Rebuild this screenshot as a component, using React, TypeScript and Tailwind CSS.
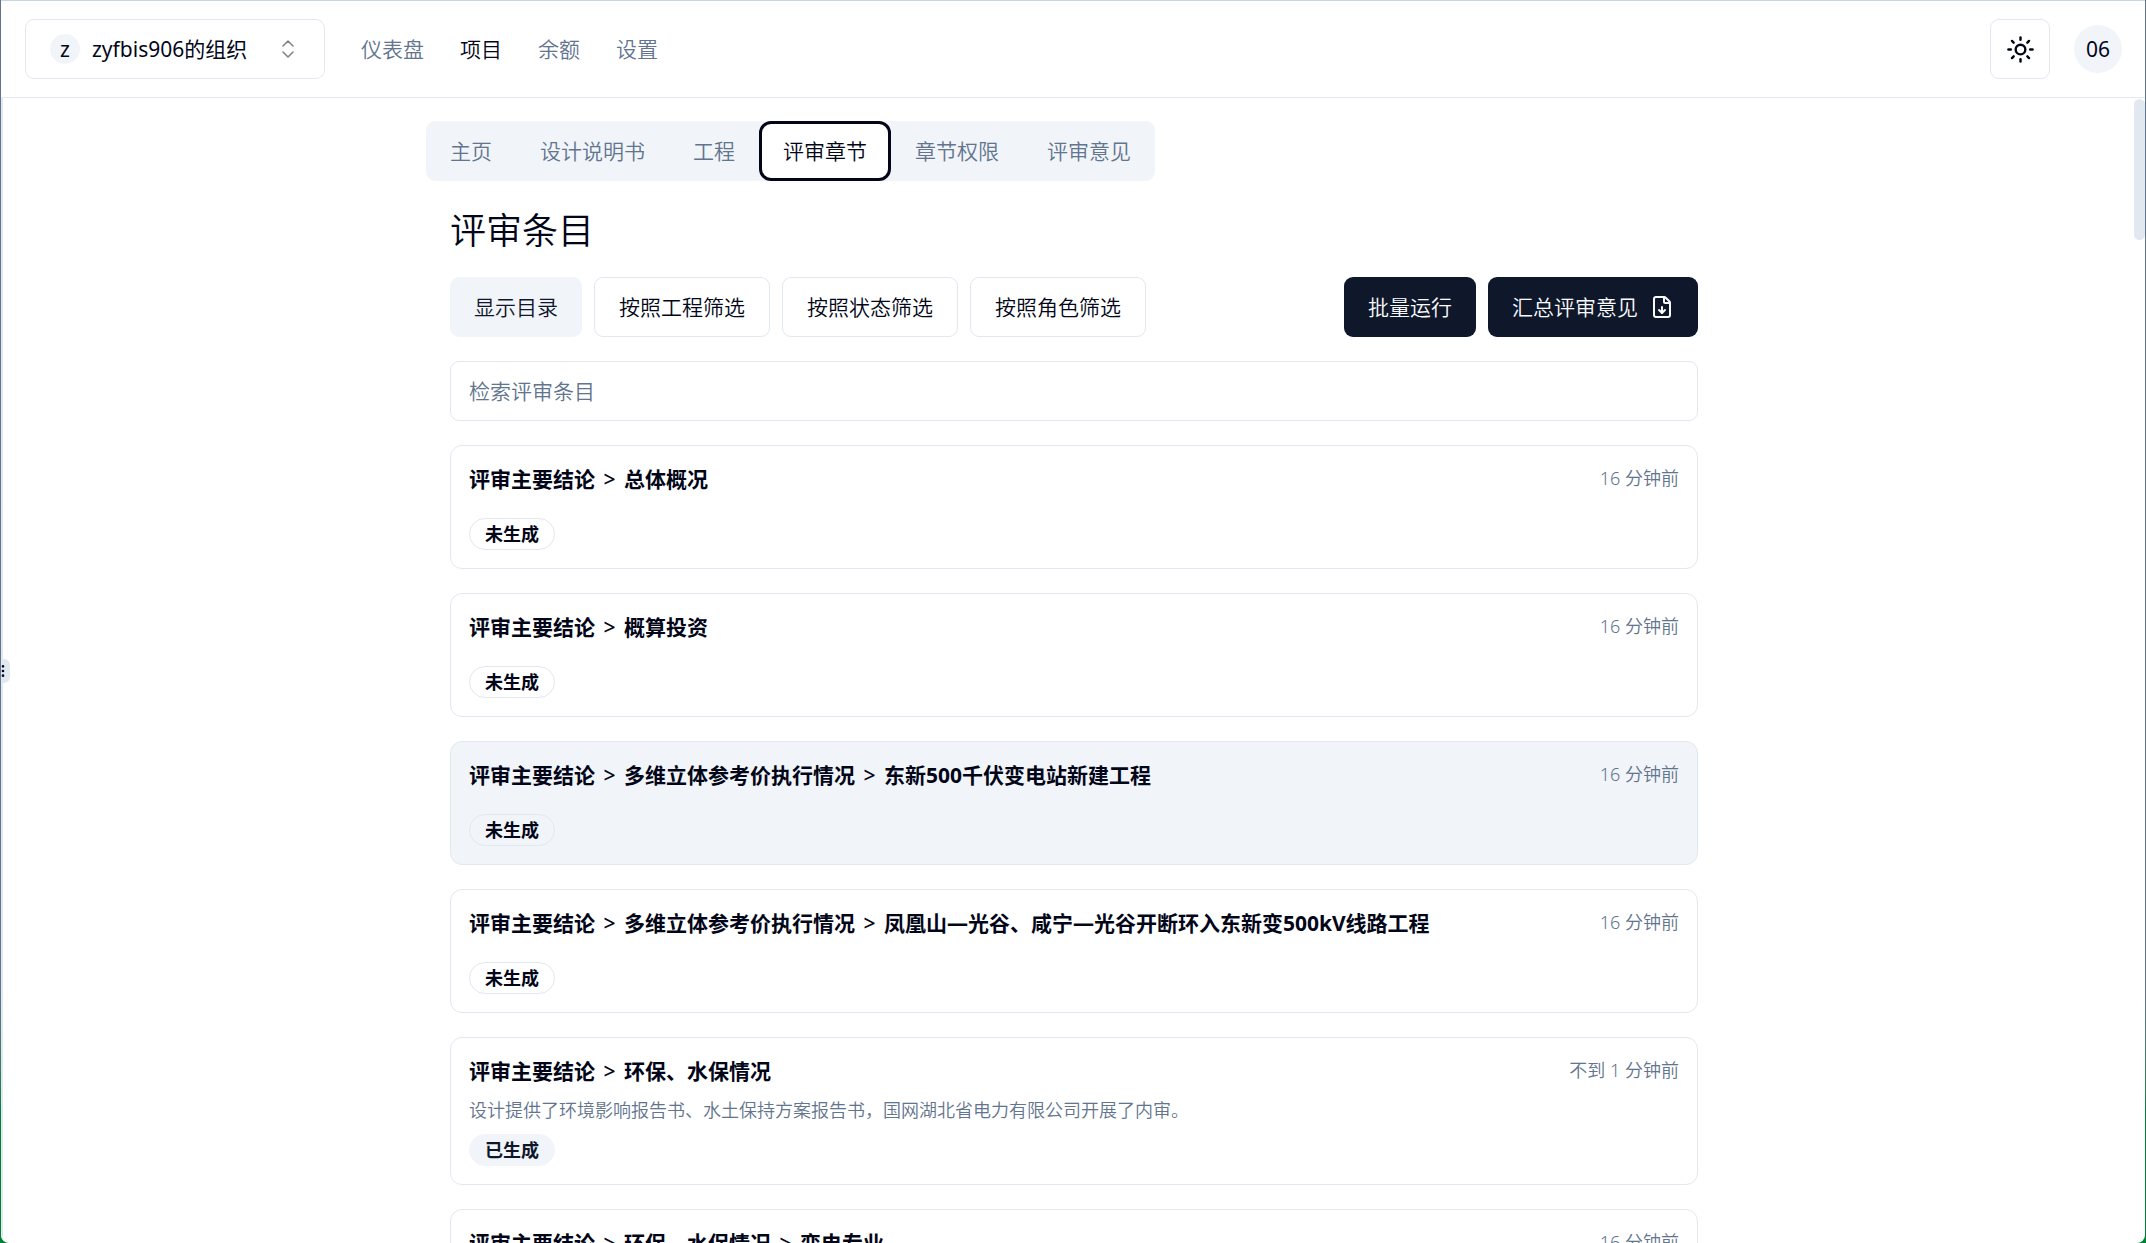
import { ChevronsUpDown, EllipsisVertical, FileDown, Sun } from "lucide-react";
import { Fragment } from "react";

const navLinks = ["仪表盘", "项目", "余额", "设置"];
const tabs = ["主页", "设计说明书", "工程", "评审章节", "章节权限", "评审意见"];
const filters = ["按照工程筛选", "按照状态筛选", "按照角色筛选"];

type Entry = {
  path: string[];
  time: string;
  summary?: string;
  done?: boolean;
  highlighted?: boolean;
};

const entries: Entry[] = [
  { path: ["评审主要结论", "总体概况"], time: "16 分钟前" },
  { path: ["评审主要结论", "概算投资"], time: "16 分钟前" },
  {
    path: ["评审主要结论", "多维立体参考价执行情况", "东新500千伏变电站新建工程"],
    time: "16 分钟前",
    highlighted: true,
  },
  {
    path: ["评审主要结论", "多维立体参考价执行情况", "凤凰山—光谷、咸宁—光谷开断环入东新变500kV线路工程"],
    time: "16 分钟前",
  },
  {
    path: ["评审主要结论", "环保、水保情况"],
    time: "不到 1 分钟前",
    summary: "设计提供了环境影响报告书、水土保持方案报告书，国网湖北省电力有限公司开展了内审。",
    done: true,
  },
  { path: ["评审主要结论", "环保、水保情况", "变电专业"], time: "16 分钟前" },
];

function Header() {
  return (
    <header className="flex h-[97px] shrink-0 items-center border-b border-slate-200 pr-[23px] pl-6">
      <button className="flex h-[60px] w-[300px] items-center rounded-[9px] border border-slate-200 px-6 font-normal">
        <span className="mr-3 flex size-[30px] items-center justify-center rounded-full bg-slate-100">z</span>
        <span>zyfbis906的组织</span>
        <ChevronsUpDown className="ml-auto size-6 opacity-50" strokeWidth={1.5} />
      </button>
      <nav className="ml-9 flex gap-9">
        {navLinks.map((label) => (
          <a key={label} href="#" className={label === "项目" ? "text-slate-950" : "text-slate-500"}>
            {label}
          </a>
        ))}
      </nav>
      <button aria-label="切换主题" className="ml-auto flex size-[60px] items-center justify-center rounded-[9px] border border-slate-200">
        <Sun className="size-[29px]" strokeWidth={2} />
      </button>
      <button className="ml-6 flex size-12 items-center justify-center rounded-full bg-slate-100 font-normal">06</button>
    </header>
  );
}

function EntryCard({ entry }: { entry: Entry }) {
  return (
    <li
      className={`flex flex-col gap-3 rounded-xl border border-slate-200 p-[18px] ${entry.highlighted ? "bg-slate-100" : "bg-white"}`}
    >
      <div className="flex h-[30px] items-start justify-between">
        <h2 className="font-bold">
          {entry.path.map((part, i) => (
            <Fragment key={part}>
              {i > 0 && (
                <>
                  {" "}
                  <span className="mx-[3px] font-medium">&gt;</span>{" "}
                </>
              )}
              {part}
            </Fragment>
          ))}
        </h2>
        <time className="text-lg leading-7 text-slate-500">{entry.time}</time>
      </div>
      <p className="text-lg leading-6 text-slate-500">{entry.summary}</p>
      <span
        className={`flex h-8 items-center self-start rounded-full border px-[15px] text-lg font-bold ${entry.done ? "border-slate-100 bg-slate-100 text-slate-900" : "border-slate-200"}`}
      >
        {entry.done ? "已生成" : "未生成"}
      </span>
    </li>
  );
}

export default function App() {
  return (
    <div className="h-screen bg-linear-to-b from-slate-500 from-80% to-green-700 to-90% px-px font-['Noto_Sans','Noto_Sans_CJK_SC',sans-serif] text-[21px] leading-[30px] font-[350] text-slate-950">
      <div className="relative flex h-full flex-col overflow-hidden rounded-b-lg border-t border-slate-300 bg-white">
        <Header />
        <div className="min-h-0 flex-1 overflow-hidden border-l-2 border-slate-200">
          <main className="mx-auto max-w-[1296px] pt-[23px]">
            <nav className="flex w-fit rounded-[9px] bg-slate-100">
              {tabs.map((tab) => (
                <a
                  key={tab}
                  href="#"
                  className={`flex h-[60px] items-center ${tab === "评审章节" ? "rounded-xl border-3 border-slate-950 bg-white px-[21px]" : "px-6 text-slate-500"}`}
                >
                  {tab}
                </a>
              ))}
            </nav>
            <div className="px-6">
              <h1 className="mt-[26px] text-4xl leading-[48px]">评审条目</h1>
              <div className="mt-[22px] flex gap-3">
                <button className="h-[60px] rounded-[9px] bg-slate-100 px-6 text-slate-900">显示目录</button>
                {filters.map((label) => (
                  <button key={label} className="h-[60px] rounded-[9px] border border-slate-200 px-6">
                    {label}
                  </button>
                ))}
                <button className="ml-auto h-[60px] rounded-[9px] bg-slate-900 px-6 text-slate-50">批量运行</button>
                <button className="flex h-[60px] items-center gap-3 rounded-[9px] bg-slate-900 px-6 text-slate-50">
                  汇总评审意见
                  <FileDown className="size-6" />
                </button>
              </div>
              <input
                type="search"
                aria-label="检索评审条目"
                placeholder="检索评审条目"
                className="mt-6 h-[60px] w-full rounded-[9px] border border-slate-200 px-[18px] placeholder:text-slate-500"
              />
              <ul className="mt-6 flex flex-col gap-6">
                {entries.map((entry) => (
                  <EntryCard key={entry.path.join("/")} entry={entry} />
                ))}
              </ul>
            </div>
          </main>
        </div>
        <div className="absolute top-[98px] right-0 h-[141px] w-[11px] rounded-full bg-slate-200" />
        <div className="absolute top-[658px] left-0 flex h-6 w-[9px] items-center rounded-r-md bg-slate-200">
          <EllipsisVertical className="-ml-1.5 size-4 shrink-0" strokeWidth={2} />
        </div>
      </div>
    </div>
  );
}
